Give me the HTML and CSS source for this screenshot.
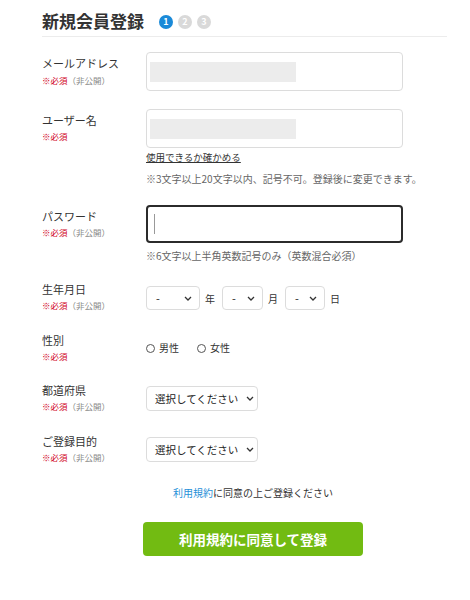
FILE: index.html
```html
<!DOCTYPE html>
<html lang="ja">
<head>
<meta charset="utf-8">
<title>新規会員登録</title>
<link rel="stylesheet" href="styles.css">
</head>
<body>
<div class="page">
  <div class="header">
    <h1 class="title">新規会員登録</h1>
    <div class="steps">
      <span class="step active">1</span>
      <span class="step">2</span>
      <span class="step">3</span>
    </div>
  </div>

  <div class="row row-email">
    <div class="label">
      <div class="name">メールアドレス</div>
      <div class="req"><span class="must">※必須</span><span class="private">（非公開）</span></div>
    </div>
    <div class="field">
      <div class="input"><span class="fill"></span></div>
    </div>
  </div>

  <div class="row row-user">
    <div class="label">
      <div class="name">ユーザー名</div>
      <div class="req"><span class="must">※必須</span></div>
    </div>
    <div class="field">
      <div class="input"><span class="fill"></span></div>
      <a class="check" href="#">使用できるか確かめる</a>
      <p class="note note-user">※3文字以上20文字以内、記号不可。登録後に変更できます。</p>
    </div>
  </div>

  <div class="row row-pass">
    <div class="label">
      <div class="name">パスワード</div>
      <div class="req"><span class="must">※必須</span><span class="private">（非公開）</span></div>
    </div>
    <div class="field">
      <div class="input focus"><span class="caret"></span></div>
      <p class="note note-pass">※6文字以上半角英数記号のみ（英数混合必須）</p>
    </div>
  </div>

  <div class="row row-birth">
    <div class="label">
      <div class="name">生年月日</div>
      <div class="req"><span class="must">※必須</span><span class="private">（非公開）</span></div>
    </div>
    <div class="field">
      <div class="dates">
        <div class="select sel-year"><span>-</span><svg class="chev" viewBox="0 0 8 5"><path d="M1 1l3 3 3-3"/></svg></div>
        <span class="unit">年</span>
        <div class="select sel-month"><span>-</span><svg class="chev" viewBox="0 0 8 5"><path d="M1 1l3 3 3-3"/></svg></div>
        <span class="unit">月</span>
        <div class="select sel-day"><span>-</span><svg class="chev" viewBox="0 0 8 5"><path d="M1 1l3 3 3-3"/></svg></div>
        <span class="unit">日</span>
      </div>
    </div>
  </div>

  <div class="row row-gender">
    <div class="label">
      <div class="name">性別</div>
      <div class="req"><span class="must">※必須</span></div>
    </div>
    <div class="field">
      <div class="radios">
        <label class="radio"><span class="dot"></span>男性</label>
        <label class="radio"><span class="dot"></span>女性</label>
      </div>
    </div>
  </div>

  <div class="row row-pref">
    <div class="label">
      <div class="name">都道府県</div>
      <div class="req"><span class="must">※必須</span><span class="private">（非公開）</span></div>
    </div>
    <div class="field">
      <div class="select sel-wide"><span>選択してください</span><svg class="chev" viewBox="0 0 8 5"><path d="M1 1l3 3 3-3"/></svg></div>
    </div>
  </div>

  <div class="row row-purpose">
    <div class="label">
      <div class="name">ご登録目的</div>
      <div class="req"><span class="must">※必須</span><span class="private">（非公開）</span></div>
    </div>
    <div class="field">
      <div class="select sel-wide"><span>選択してください</span><svg class="chev" viewBox="0 0 8 5"><path d="M1 1l3 3 3-3"/></svg></div>
    </div>
  </div>

  <div class="footer">
    <p class="terms"><a href="#">利用規約</a>に同意の上ご登録ください</p>
    <button class="submit" type="button">利用規約に同意して登録</button>
  </div>
</div>
</body>
</html>
```

FILE: styles.css
```css
* { box-sizing: border-box; }

body {
  margin: 0;
  background: #fff;
  color: #333;
  font-family: "Noto Sans CJK JP", "Noto Sans", sans-serif;
}

.page {
  width: 405px;
  margin-left: 42px;
  padding-top: 6px;
}

.header {
  display: flex;
  align-items: center;
  height: 31px;
  border-bottom: 1px solid #ececec;
}

.title {
  margin: 0;
  font-size: 17px;
  line-height: 30px;
  font-weight: bold;
  color: #333;
}

.steps {
  display: flex;
  gap: 5px;
  margin-left: 15px;
  margin-top: 2px;
}

.step {
  width: 14px;
  height: 14px;
  border-radius: 50%;
  background: #d9d9d9;
  color: #fff;
  font-size: 9px;
  font-weight: bold;
  line-height: 14px;
  text-align: center;
}

.step.active { background: #1a8ad8; }

.row {
  display: grid;
  grid-template-columns: 104px 257px;
}

.name {
  font-size: 11px;
  line-height: 16px;
  color: #333;
}

.req {
  margin-top: 2px;
  font-size: 8.5px;
  line-height: 12px;
}

.must { color: #d0021b; }
.private { color: #888; }

.input {
  height: 39px;
  border: 1px solid #dcdcdc;
  border-radius: 4px;
  background: #fff;
  padding: 9px 0 0 3px;
}

.fill {
  display: block;
  width: 146px;
  height: 20px;
  background: #ececec;
}

.input.focus {
  height: 38px;
  border: 2px solid #2b2b2b;
  padding: 7px 0 0 6px;
}

.caret {
  display: block;
  width: 1px;
  height: 20px;
  background: #999;
}

.row-email { margin-top: 15px; }
.row-email .label,
.row-user .label,
.row-pass .label { padding-top: 3px; }
.row-email .req { margin-top: 3px; }

.row-user { margin-top: 18px; }

.check {
  display: block;
  margin-top: 2px;
  font-size: 9.5px;
  line-height: 14px;
  color: #333;
  text-decoration: underline;
}

.note {
  margin: 0;
  font-size: 10px;
  line-height: 14px;
  color: #666;
  white-space: nowrap;
}

.note-user { margin-top: 8px; }

.row-pass { margin-top: 19px; }
.note-pass { margin-top: 6px; }

.row-birth { margin-top: 18px; }

.dates {
  display: flex;
  align-items: center;
  margin-top: 5px;
}

.select {
  display: flex;
  align-items: center;
  justify-content: space-between;
  height: 24px;
  border: 1px solid #dcdcdc;
  border-radius: 4px;
  background: #fff;
  padding: 0 7px 0 9px;
  font-size: 11px;
  color: #222;
  white-space: nowrap;
}

.chev {
  flex: none;
  width: 8px;
  height: 5px;
  fill: none;
  stroke: #333;
  stroke-width: 1.3;
}

.sel-year { width: 54px; }
.sel-month { width: 41px; }
.sel-day { width: 40px; }

.unit {
  font-size: 10px;
  margin: 0 7px 0 5px;
  color: #333;
}

.row-gender { margin-top: 21px; }

.radios {
  display: flex;
  gap: 18px;
  margin-top: 8px;
}

.radio {
  display: flex;
  align-items: center;
  gap: 4px;
  font-size: 10px;
  line-height: 16px;
  color: #333;
}

.dot {
  width: 9px;
  height: 9px;
  border: 1px solid #555;
  border-radius: 50%;
}

.row-pref { margin-top: 20px; }
.row-purpose { margin-top: 21px; }

.row-pref .select,
.row-purpose .select {
  margin-top: 4px;
  height: 25px;
}

.sel-wide {
  width: 112px;
  padding: 0 3px 0 8px;
  font-size: 10.5px;
}

.footer {
  width: 422px;
  display: flex;
  flex-direction: column;
  align-items: center;
  margin-top: 23px;
}

.terms {
  margin: 0;
  font-size: 10px;
  line-height: 14px;
  color: #333;
}

.terms a {
  color: #1f8fd8;
  text-decoration: none;
}

.submit {
  margin-top: 22px;
  width: 220px;
  height: 34px;
  border: none;
  border-radius: 4px;
  background: #72bb12;
  color: #fff;
  font-family: inherit;
  font-size: 13.5px;
  font-weight: bold;
  cursor: pointer;
}
```
